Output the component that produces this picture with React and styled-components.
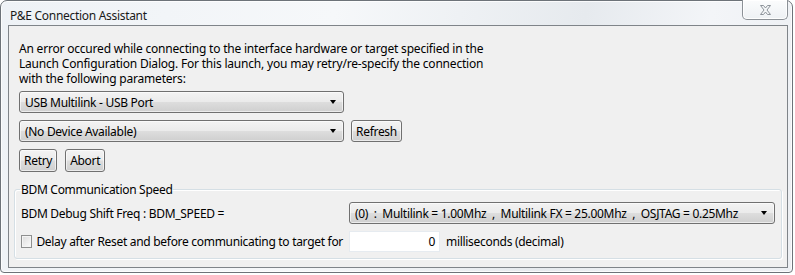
import React from "react";
import styled, { createGlobalStyle } from "styled-components";

const Global = createGlobalStyle`
  html, body { margin: 0; padding: 0; background: #ffffff; }
  body {
    font-family: "Noto Sans", "Liberation Sans", sans-serif;
    font-size: 12px;
    letter-spacing: -0.3px;
    color: #000;
  }
`;

const Window = styled.div`
  box-sizing: border-box;
  width: 793px;
  height: 273px;
  border: 1px solid #6d7379;
  border-radius: 7px 7px 4px 4px;
  background: linear-gradient(100deg, #eef2f6 0%, #f6f8fa 40%, #e6eaee 70%, #f3f5f8 85%, #eceff3 100%);
  padding: 0 4px 4px 7px;
  display: flex;
  flex-direction: column;
  box-shadow: inset 0 0 0 1px rgba(255,255,255,0.8);
`;

const TitleBar = styled.div`
  height: 28px;
  display: flex;
  align-items: flex-start;
`;

const Title = styled.div`
  padding: 7px 0 0 2px;
  font-size: 12px;
  line-height: 15px;
  color: #1a1a1a;
`;

const CloseButton = styled.div`
  margin-left: auto;
  margin-top: -1px;
  width: 46px;
  height: 20px;
  box-sizing: border-box;
  border: 1px solid #8c9197;
  border-top: none;
  border-radius: 0 0 5px 5px;
  background: linear-gradient(#fbfcfd, #eef1f4);
  box-shadow: inset 0 0 0 1px rgba(255,255,255,0.9);
  display: flex;
  align-items: center;
  justify-content: center;
`;

const Client = styled.div`
  flex: 1;
  box-sizing: border-box;
  border: 1px solid #7f8489;
  background: #f0f0f0;
  padding: 15px 5px 8px 5px;
  display: flex;
  flex-direction: column;
`;

const Section = styled.div`
  padding: 0 0 0 5px;
  display: flex;
  flex-direction: column;
`;

const Message = styled.p`
  margin: 0;
  width: 471px;
  line-height: 15px;
  letter-spacing: -0.2px;
`;

const Row = styled.div`
  display: flex;
  align-items: center;
  gap: ${(p) => p.$gap || 7}px;
  margin-top: ${(p) => p.$top || 0}px;
  white-space: nowrap;
`;

const Combo = styled.div`
  box-sizing: border-box;
  width: ${(p) => p.$width}px;
  height: 22px;
  border: 1px solid #707070;
  border-radius: 3px;
  background: linear-gradient(#f3f3f3 0%, #ebebeb 48%, #dddddd 52%, #cfcfcf 100%);
  box-shadow: inset 0 0 0 1px rgba(255,255,255,0.6);
  display: flex;
  align-items: center;
  padding: 0 7px 0 5px;
  white-space: pre;
  flex-shrink: 0;
`;

const ComboText = styled.span`
  flex: 1;
  overflow: hidden;
`;

const Arrow = styled.span`
  width: 0;
  height: 0;
  border-left: 3.5px solid transparent;
  border-right: 3.5px solid transparent;
  border-top: 4px solid #000;
`;

const Button = styled.button`
  box-sizing: border-box;
  height: ${(p) => p.$h || 22}px;
  padding: 0 4px;
  border: 1px solid #707070;
  border-radius: 3px;
  background: linear-gradient(#f3f3f3 0%, #ebebeb 48%, #dddddd 52%, #cfcfcf 100%);
  box-shadow: inset 0 0 0 1px rgba(255,255,255,0.6);
  font: inherit;
  letter-spacing: inherit;
  color: #000;
`;

const Group = styled.fieldset`
  flex: 1;
  margin: 10px 0 0 0;
  padding: 5px 5px 6px 6px;
  border: 1px solid #d5dfe5;
  border-radius: 3px;
  box-shadow: inset 1px 1px 0 #fff, 1px 1px 0 #fff;
  display: flex;
  flex-direction: column;
`;

const Legend = styled.legend`
  padding: 0 1px;
  margin-left: -1px;
  line-height: 15px;
`;

const Label = styled.span`
  width: ${(p) => p.$width}px;
  flex-shrink: 0;
`;

const CheckLabel = styled.label`
  display: flex;
  align-items: center;
  gap: 4px;
  width: 322px;
  flex-shrink: 0;
`;

const Box = styled.span`
  box-sizing: border-box;
  width: 13px;
  height: 13px;
  border: 1px solid #8e8f8f;
  background: linear-gradient(135deg, #dcdcdc, #fbfbfb);
  box-shadow: inset 0 0 0 1px #f4f4f4;
`;

const NumberField = styled.div`
  box-sizing: border-box;
  width: 91px;
  height: 21px;
  background: #fff;
  border: 1px solid #e6ebf0;
  text-align: right;
  padding: 0 4px;
  line-height: 19px;
`;

const CloseIcon = () => (
  <svg width="13" height="12" viewBox="0 0 13 12">
    <path
      d="M1.5 1.5 H4.5 L6.5 4 L8.5 1.5 H11.5 L8 6 L11.5 10.5 H8.5 L6.5 8 L4.5 10.5 H1.5 L5 6 Z"
      fill="#f4f6f8"
      stroke="#8d939a"
      strokeWidth="1"
      strokeLinejoin="round"
    />
  </svg>
);

export default function App() {
  return (
    <>
      <Global />
      <Window>
        <TitleBar>
          <Title>P&amp;E Connection Assistant</Title>
          <CloseButton>
            <CloseIcon />
          </CloseButton>
        </TitleBar>
        <Client>
          <Section>
            <Message>
              An error occured while connecting to the interface hardware or target specified in the
              Launch Configuration Dialog. For this launch, you may retry/re-specify the connection
              with the following parameters:
            </Message>
            <Row $top={5}>
              <Combo $width={325}>
                <ComboText>USB Multilink - USB Port</ComboText>
                <Arrow />
              </Combo>
            </Row>
            <Row $top={7}>
              <Combo $width={325}>
                <ComboText>(No Device Available)</ComboText>
                <Arrow />
              </Combo>
              <Button>Refresh</Button>
            </Row>
            <Row $top={7} $gap={8}>
              <Button $h={23}>Retry</Button>
              <Button $h={23}>Abort</Button>
            </Row>
          </Section>
          <Group>
            <Legend>BDM Communication Speed</Legend>
            <Row>
              <Label $width={321}>BDM Debug Shift Freq : BDM_SPEED =</Label>
              <Combo $width={426}>
                <ComboText>(0)  :  Multilink = 1.00Mhz  ,  Multilink FX = 25.00Mhz  ,  OSJTAG = 0.25Mhz</ComboText>
                <Arrow />
              </Combo>
            </Row>
            <Row $top={7} $gap={6}>
              <CheckLabel>
                <Box />
                Delay after Reset and before communicating to target for
              </CheckLabel>
              <NumberField>0</NumberField>
              <span>milliseconds (decimal)</span>
            </Row>
          </Group>
        </Client>
      </Window>
    </>
  );
}
